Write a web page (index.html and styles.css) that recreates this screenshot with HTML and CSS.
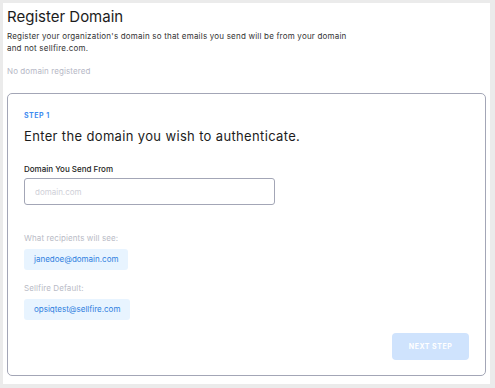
FILE: index.html
```html
<!DOCTYPE html>
<html lang="en">
<head>
    <meta charset="UTF-8">
    <meta name="viewport" content="width=device-width, initial-scale=1.0">
    <title>Register Domain</title>
    <link rel="stylesheet" href="styles.css">
</head>
<body>
    <section class="panel">
        <h1 class="title">Register Domain</h1>
        <p class="intro">Register your organization's domain so that emails you send will be from your domain<br>and not sellfire.com.</p>
        <p class="empty">No domain registered</p>

        <div class="card">
            <div class="step">STEP 1</div>
            <h2 class="question">Enter the domain you wish to authenticate.</h2>

            <label class="label" for="domain">Domain You Send From</label>
            <input class="field" id="domain" type="text" placeholder="domain.com">

            <div class="preview">
                <div class="hint">What recipients will see:</div>
                <div class="chip">janedoe@domain.com</div>
                <div class="hint">Sellfire Default:</div>
                <div class="chip">opsiqtest@sellfire.com</div>
            </div>

            <div class="controls">
                <button class="next" type="button" disabled>NEXT STEP</button>
            </div>
        </div>
    </section>
</body>
</html>
```

FILE: styles.css
```css
body {
    margin: 0px;
    padding: 3px 5px 4px 3px;
    background: #ebebeb;
    font-family: Inter, "Noto Sans", sans-serif;
    color: #1c1c1c;
}
.panel {
    background: white;
    padding: 5px 4px 8px 4px;
    height: 368px;
    display: flex;
    flex-direction: column;
}
.title {
    font-size: 15px;
    font-weight: 400;
    margin: 0px;
    line-height: 18px;
}
.intro {
    font-size: 8px;
    line-height: 12px;
    letter-spacing: 0.2px;
    margin: 4px 0px 0px 0px;
    color: #333;
}
.empty {
    font-size: 8px;
    line-height: 12px;
    letter-spacing: 0.1px;
    margin: 11px 0px 0px 0px;
    color: #b6b8c6;
}
.card {
    flex: 1;
    margin-top: 16px;
    border: 1px solid #a3a6b6;
    border-radius: 5px;
    padding: 17px 16px 15px 16px;
    display: flex;
    flex-direction: column;
    align-items: flex-start;
}
.step {
    font-size: 7px;
    font-weight: 700;
    letter-spacing: 0.5px;
    color: #3f8cf0;
    line-height: 10px;
}
.question {
    font-size: 13px;
    font-weight: 400;
    letter-spacing: 0.35px;
    margin: 6px 0px 0px 0px;
    line-height: 18px;
}
.label {
    font-size: 8px;
    font-weight: 500;
    margin-top: 18px;
    line-height: 12px;
}
.field {
    margin-top: 3px;
    box-sizing: border-box;
    width: 251px;
    height: 27px;
    border: 1px solid #a3a6b6;
    border-radius: 3px;
    padding: 0px 10px;
    font-family: inherit;
    font-size: 8px;
    outline: none;
}
.field::placeholder {
    color: #cfd0d8;
}
.preview {
    margin-top: 27px;
    display: flex;
    flex-direction: column;
    align-items: flex-start;
}
.hint {
    font-size: 8px;
    line-height: 12px;
    letter-spacing: 0.1px;
    color: #b9bbc6;
}
.chip {
    margin: 5px 0px 12px 0px;
    background: #e8f4ff;
    color: #2f7fe0;
    font-size: 8px;
    line-height: 21px;
    padding: 0px 10px;
    border-radius: 3px;
}
.controls {
    align-self: stretch;
    display: flex;
    justify-content: flex-end;
    margin-top: auto;
}
.next {
    background: #cfe3fd;
    color: white;
    border: none;
    border-radius: 4px;
    width: 77px;
    height: 27px;
    font-family: inherit;
    font-size: 7px;
    font-weight: 700;
    letter-spacing: 0.5px;
}
```
